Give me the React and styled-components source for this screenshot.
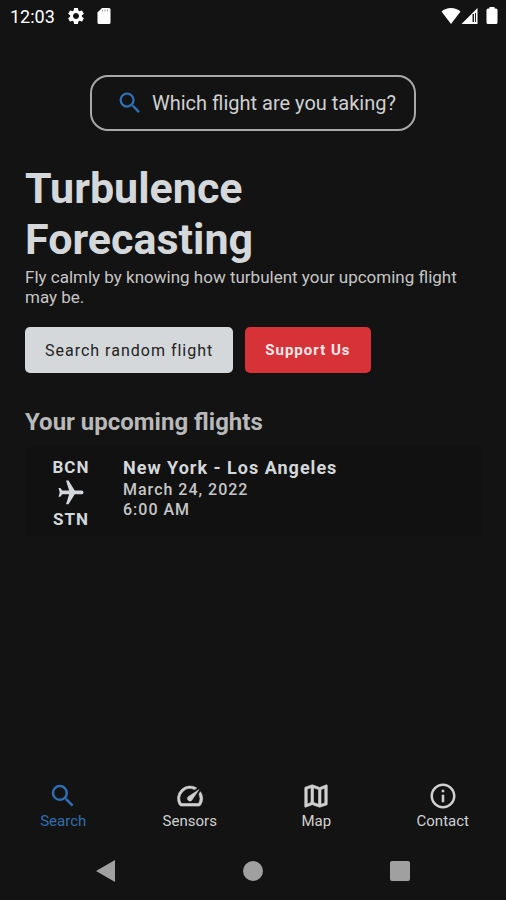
import React from 'react';
import styled, { createGlobalStyle } from 'styled-components';
import {
  MdSearch,
  MdSettings,
  MdFlight,
  MdSpeed,
  MdOutlineMap,
  MdInfoOutline,
} from 'react-icons/md';

const flights = [
  {
    from: 'BCN',
    to: 'STN',
    route: 'New York - Los Angeles',
    date: 'March 24, 2022',
    time: '6:00 AM',
  },
];

const tabs = [
  { label: 'Search', Icon: MdSearch, active: true },
  { label: 'Sensors', Icon: MdSpeed, bold: true },
  { label: 'Map', Icon: MdOutlineMap, bold: true },
  { label: 'Contact', Icon: MdInfoOutline },
];

export default function App() {
  return (
    <>
      <GlobalStyle />
      <Screen>
        <StatusBar>
          <Clock>12:03</Clock>
          <MdSettings size={20} />
          <svg width="14" height="18" viewBox="0 0 14 18">
            <path fill="currentColor" d="M5 1h7a1.500 1.500 0 0 1 1.500 1.500v13a1.500 1.500 0 0 1-1.500 1.500H2A1.500 1.500 0 0 1 .5 15.500V5.500z" />
            <path stroke="#999" strokeWidth="1" d="M5.500 2.500v2M8 2.500v2M10.500 2.500v2" />
          </svg>
          <StatusRight>
            <svg width="20" height="18" viewBox="0 0 20 18">
              <path fill="currentColor" d="M10 17L.5 4.500C3 2.200 6.300 1 10 1s7 1.200 9.500 3.500z" />
            </svg>
            <svg width="17" height="18" viewBox="0 0 17 18">
              <path fill="currentColor" d="M16.500 1v16H.5z" />
              <path fill="#222" d="M11.500 7h1.500v8h-1.500zM14 6h1v9h-1z" />
            </svg>
            <Battery width="12" height="18" viewBox="0 0 12 18">
              <path fill="currentColor" d="M3.500 0h5v1.500H10A1.500 1.500 0 0 1 11.500 3v12.500A1.500 1.500 0 0 1 10 17H2A1.500 1.500 0 0 1 .5 15.500V3A1.500 1.500 0 0 1 2 1.500h1.500z" />
            </Battery>
          </StatusRight>
        </StatusBar>

        <Content>
          <SearchBox>
            <MdSearch size={28} />
            <SearchInput
              type="text"
              aria-label="Flight"
              placeholder="Which flight are you taking?"
            />
          </SearchBox>

          <Title>
            Turbulence
            <br />
            Forecasting
          </Title>
          <Intro>
            Fly calmly by knowing how turbulent your upcoming flight may be.
          </Intro>

          <Actions>
            <Button>Search random flight</Button>
            <Button $primary>Support Us</Button>
          </Actions>

          <Subtitle>Your upcoming flights</Subtitle>
          {flights.map((flight) => (
            <FlightCard key={flight.route}>
              <Airports>
                <span>{flight.from}</span>
                <PlaneIcon size={30} />
                <span>{flight.to}</span>
              </Airports>
              <Details>
                <Route>{flight.route}</Route>
                <Info>{flight.date}</Info>
                <Info>{flight.time}</Info>
              </Details>
            </FlightCard>
          ))}
        </Content>

        <TabBar>
          {tabs.map(({ label, Icon, active, bold }) => (
            <Tab key={label} href="#" $active={active} $bold={bold}>
              <Icon size={30} />
              {label}
            </Tab>
          ))}
        </TabBar>

        <SystemBar>
          <SystemButton aria-label="Back">
            <svg width="22" height="22" viewBox="0 0 22 22">
              <path fill="currentColor" d="M20 0v22L1 11z" />
            </svg>
          </SystemButton>
          <SystemButton aria-label="Home">
            <svg width="22" height="22" viewBox="0 0 22 22">
              <circle fill="currentColor" cx="11" cy="11" r="10" />
            </svg>
          </SystemButton>
          <SystemButton aria-label="Recent apps">
            <svg width="22" height="22" viewBox="0 0 22 22">
              <rect fill="currentColor" x="1" y="1" width="20" height="20" rx="2" />
            </svg>
          </SystemButton>
        </SystemBar>
      </Screen>
    </>
  );
}

const GlobalStyle = createGlobalStyle`
    *{
        box-sizing: border-box;
    }

    body{
        margin: 0;
        background: #131313;
        font-family: Roboto, "Liberation Sans", sans-serif;
    }
`

const Screen = styled.div`
    min-height: 100vh;
    display: flex;
    flex-direction: column;
    background: #131313;
    color: #d5d8da;
`

const StatusBar = styled.header`
    height: 32px;
    padding: 0 8px 0 10px;
    display: flex;
    align-items: center;
    gap: 11px;
    color: white;
`

const Clock = styled.span`
    font-size: 18px;
`

const StatusRight = styled.div`
    margin-left: auto;
    display: flex;
    align-items: center;
`

const Battery = styled.svg`
    margin-left: 8px;
`

const Content = styled.main`
    flex: 1;
    padding: 43px 25px 0;
    display: flex;
    flex-direction: column;
`

const SearchBox = styled.label`
    width: 326px;
    height: 56px;
    padding: 0 16px 0 24px;
    align-self: center;
    display: flex;
    align-items: center;
    gap: 8px;
    border: 2px solid #a8a8a8;
    border-radius: 18px;
    color: #2f6fb3;
`

const SearchInput = styled.input`
    flex: 1;
    min-width: 0;
    padding: 0;
    border: none;
    outline: none;
    background: transparent;
    color: #d5d8da;
    font-family: inherit;
    font-size: 20px;

    &::placeholder{
        color: #d0d0d0;
        opacity: 1;
    }
`

const Title = styled.h1`
    margin: 32px 0 0;
    font-size: 43px;
    line-height: 51px;
    font-weight: bold;
`

const Intro = styled.p`
    margin: 2px 0 0;
    color: #c6c6c6;
    font-size: 17px;
    line-height: 20px;
`

const Actions = styled.div`
    margin-top: 20px;
    display: flex;
    gap: 12px;
`

const Button = styled.button`
    height: 46px;
    padding: 0 20px;
    border: none;
    border-radius: 5px;
    background: ${({ $primary }) => ($primary ? '#d63238' : '#d5d8da')};
    color: ${({ $primary }) => ($primary ? '#fbe9e9' : '#222')};
    font-family: inherit;
    font-size: ${({ $primary }) => ($primary ? 15 : 16)}px;
    font-weight: ${({ $primary }) => ($primary ? 700 : 400)};
    letter-spacing: 1px;
`

const Subtitle = styled.h2`
    margin: 34px 0 0;
    color: #b9b9b9;
    font-size: 24px;
    line-height: 30px;
    font-weight: bold;
`

const FlightCard = styled.article`
    margin-top: 10px;
    padding: 9px 22px 6px;
    display: flex;
    gap: 28px;
    background: #111111;
    letter-spacing: 1px;
`

const Airports = styled.div`
    width: 48px;
    display: flex;
    flex-direction: column;
    align-items: center;
    font-size: 17px;
    line-height: 22px;
    font-weight: bold;
`

const PlaneIcon = styled(MdFlight)`
    transform: rotate(90deg);
`

const Details = styled.div`
    display: flex;
    flex-direction: column;
`

const Route = styled.h3`
    margin: 0;
    font-size: 18px;
    line-height: 24px;
    font-weight: bold;
`

const Info = styled.span`
    color: #c6c6c6;
    font-size: 16px;
    line-height: 20px;
    font-weight: 500;
`

const TabBar = styled.nav`
    display: grid;
    grid-template-columns: repeat(4, 1fr);
`

const Tab = styled.a`
    height: 61px;
    display: flex;
    flex-direction: column;
    align-items: center;
    color: ${({ $active }) => ($active ? '#2f6fb3' : '#d0d0d0')};
    font-size: 15px;
    line-height: 20px;
    text-decoration: none;

    & path:not([fill="none"]){
        stroke: currentColor;
        stroke-width: ${({ $bold }) => ($bold ? 0.5 : 0)};
    }
`

const SystemBar = styled.footer`
    height: 58px;
    padding: 0 33px;
    display: grid;
    grid-template-columns: repeat(3, 1fr);
    align-items: center;
    justify-items: center;
`

const SystemButton = styled.button`
    padding: 0;
    border: none;
    background: transparent;
    color: #a0a0a0;
    display: flex;
`
